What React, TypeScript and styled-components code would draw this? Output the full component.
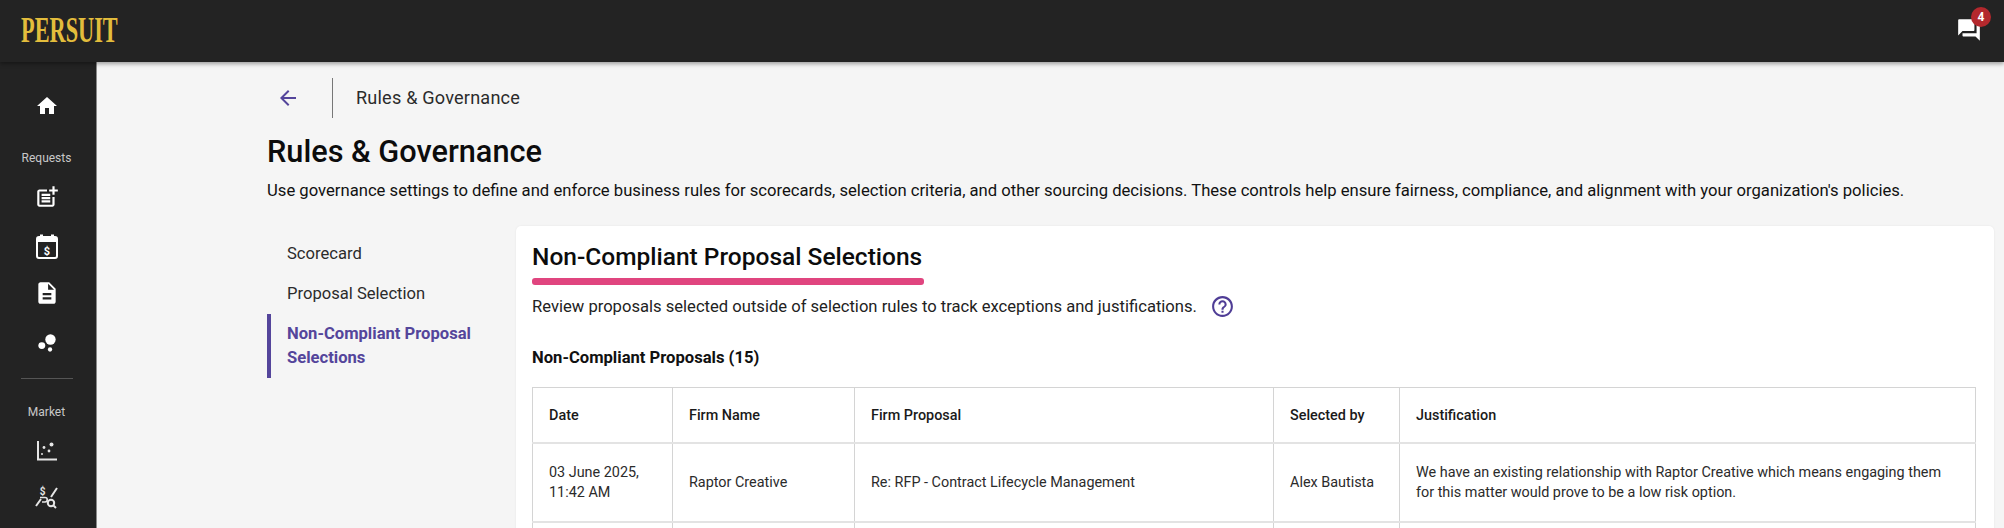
import styled, { createGlobalStyle } from "styled-components";
import { MdArrowBack, MdBubbleChart, MdDescription, MdHelpOutline, MdHome, MdOutlinePostAdd, MdQuestionAnswer } from "react-icons/md";

const GlobalStyle = createGlobalStyle`
  html, body {
    margin: 0;
    padding: 0;
    background: #f5f5f5;
    font-family: Roboto, "Liberation Sans", sans-serif;
    overflow: hidden;
  }
`;

const Page = styled.div`
  width: 2004px;
  height: 528px;
  display: flex;
  flex-direction: column;
  overflow: hidden;
`;

const TopBar = styled.header`
  height: 62px;
  flex: none;
  background: #232323;
  display: flex;
  align-items: center;
  justify-content: space-between;
  padding: 0 22px 0 21px;
  box-shadow: 0 2px 4px rgba(0, 0, 0, 0.35);
  position: relative;
  z-index: 2;
`;

const Logo = styled.div`
  font-family: "Liberation Serif", serif;
  font-weight: 700;
  font-size: 36px;
  line-height: 1;
  color: #e3bd3c;
  width: 97px;
  white-space: nowrap;
  transform: scaleX(0.62);
  transform-origin: left center;
  margin-top: -3px;
`;

const ChatButton = styled.div`
  position: relative;
  width: 26px;
  height: 26px;
  color: #fff;
  margin-top: -2px;
  font-size: 26px;
  line-height: 0;
`;

const Badge = styled.span`
  position: absolute;
  top: -10px;
  left: 15px;
  width: 20px;
  height: 20px;
  border-radius: 50%;
  background: #b3282d;
  color: #fff;
  font-size: 12px;
  font-weight: 700;
  line-height: 20px;
  text-align: center;
`;

const Body = styled.div`
  flex: 1;
  display: flex;
  min-height: 0;
`;

const SideBar = styled.nav`
  width: 97px;
  flex: none;
  box-sizing: border-box;
  padding-right: 3px;
  background: #232323;
  border-right: 1px solid #8a8a8a;
  display: flex;
  flex-direction: column;
  align-items: center;
  color: #fff;
`;

const SideIcon = styled.div<{ $top: number }>`
  margin-top: ${(p) => p.$top}px;
  height: 28px;
  display: flex;
  align-items: center;
  justify-content: center;
  font-size: 26px;
  line-height: 0;
`;

const SideLabel = styled.div<{ $top: number }>`
  margin-top: ${(p) => p.$top}px;
  font-size: 12px;
  line-height: 16px;
  color: #c8c8c8;
`;

const SideRule = styled.div`
  margin-top: 21px;
  width: 52px;
  height: 1px;
  background: #555;
`;

const Main = styled.main`
  flex: 1;
  min-width: 0;
  padding: 16px 10px 0 170px;
`;

const Crumbs = styled.div`
  display: flex;
  align-items: center;
  height: 40px;
`;

const BackLink = styled.div`
  width: 65px;
  padding-left: 9px;
  box-sizing: border-box;
  color: #54459b;
  font-size: 24px;
  line-height: 0;
`;

const CrumbText = styled.div`
  border-left: 1px solid #777;
  height: 40px;
  padding-left: 23px;
  line-height: 40px;
  font-size: 18.1px;
  letter-spacing: 0.2px;
  color: #2b2b2b;
`;

const Title = styled.h1`
  margin: 14px 0 0;
  font-size: 30.7px;
  line-height: 40px;
  font-weight: 500;
  color: #0c0c0c;
`;

const Lead = styled.p`
  margin: 7px 0 0;
  font-size: 16.65px;
  line-height: 24px;
  color: #111;
  white-space: nowrap;
`;

const Columns = styled.div`
  margin-top: 23px;
  display: flex;
`;

const SideTabs = styled.div`
  width: 249px;
  flex: none;
  padding-top: 8px;
`;

const Tab = styled.div<{ $active?: boolean }>`
  border-left: 4px solid ${(p) => (p.$active ? "#54459b" : "transparent")};
  padding: 8px 30px 8px 16px;
  font-size: 16.6px;
  line-height: 24px;
  font-weight: ${(p) => (p.$active ? 700 : 400)};
  color: ${(p) => (p.$active ? "#54459b" : "#2b2b2b")};
`;

const Card = styled.section`
  flex: 1;
  background: #fff;
  border-radius: 5px 5px 0 0;
  padding: 15px 18px 0 16px;
  height: 320px;
  box-shadow: 0 0 2px rgba(0, 0, 0, 0.08);
`;

const CardTitle = styled.h2`
  display: inline-block;
  margin: 0;
  font-size: 24.5px;
  line-height: 32px;
  font-weight: 500;
  color: #0c0c0c;

  &::after {
    content: "";
    display: block;
    height: 7px;
    margin-top: 5px;
    margin-right: -2px;
    border-radius: 3px;
    background: #e0457f;
  }
`;

const CardLead = styled.div`
  display: flex;
  align-items: center;
  gap: 13px;
  margin-top: 9px;
  font-size: 16.6px;
  line-height: 24px;
  color: #222;
`;

const HelpIcon = styled.span`
  color: #4f3d96;
  font-size: 25px;
  line-height: 0;
`;

const SectionTitle = styled.h3`
  margin: 27px 0 0;
  font-size: 16.6px;
  line-height: 24px;
  font-weight: 700;
  color: #111;
`;

const Table = styled.table`
  margin-top: 17px;
  width: 1443px;
  table-layout: fixed;
  border-collapse: collapse;
  border: 1px solid #c9c9c9;
`;

const HeadCell = styled.th`
  height: 54px;
  padding: 0 16px;
  text-align: left;
  font-size: 14.4px;
  font-weight: 500;
  color: #1a1a1a;
  border: 1px solid #d4d4d4;
  border-bottom: 2px solid #e3e3e3;
`;

const Cell = styled.td`
  height: 77px;
  padding: 0 16px;
  font-size: 14.4px;
  line-height: 20px;
  color: #2b2b2b;
  border: 1px solid #d4d4d4;
  border-bottom: 2px solid #e3e3e3;
`;

const DollarCalendar = () => (
  <svg width="24" height="26" viewBox="0 0 24 26" fill="none">
    <rect x="2" y="3" width="20" height="21" rx="2" stroke="#fff" strokeWidth="2" />
    <rect x="2" y="3" width="20" height="5" fill="#fff" />
    <rect x="5" y="0.5" width="3" height="3" fill="#fff" />
    <rect x="16" y="0.5" width="3" height="3" fill="#fff" />
    <text x="12" y="20.5" fontSize="11" fontWeight="700" fontFamily="Roboto" fill="#fff" textAnchor="middle">$</text>
  </svg>
);

const ScatterChart = () => (
  <svg width="20" height="20" viewBox="0 0 20 20" fill="#e6e6e6">
    <path d="M0 0h2v17.5h18v2H0z" />
    <circle cx="14.5" cy="3.5" r="2" />
    <circle cx="7" cy="6.5" r="1.4" />
    <circle cx="12" cy="10" r="1.4" />
    <circle cx="5" cy="13" r="1" />
  </svg>
);

const PriceSearch = () => (
  <svg width="24" height="26" viewBox="0 0 24 26" fill="none" stroke="#e6e6e6" strokeWidth="2">
    <text x="7.5" y="9.5" fontSize="10" fontWeight="700" fontFamily="Roboto" fill="#e6e6e6" stroke="none" textAnchor="middle">$</text>
    <path d="M22 3l-6 9M1 21l5-7" />
    <path d="M5 12.5h5a2 2 0 0 1 0 4.5H7" strokeWidth="1.6" />
    <circle cx="16" cy="18" r="3.2" />
    <path d="M18.5 20.5l2.5 2.5" />
  </svg>
);

const rows = [
  {
    date: ["03 June 2025,", "11:42 AM"],
    firm: "Raptor Creative",
    proposal: "Re: RFP - Contract Lifecycle Management",
    by: "Alex Bautista",
    why: "We have an existing relationship with Raptor Creative which means engaging them for this matter would prove to be a low risk option.",
  },
];

export default function App() {
  return (
    <Page>
      <GlobalStyle />
      <TopBar>
        <Logo>PERSUIT</Logo>
        <ChatButton>
          <MdQuestionAnswer />
          <Badge>4</Badge>
        </ChatButton>
      </TopBar>
      <Body>
        <SideBar>
          <SideIcon $top={30}><MdHome size={24} /></SideIcon>
          <SideLabel $top={30}>Requests</SideLabel>
          <SideIcon $top={17}><MdOutlinePostAdd /></SideIcon>
          <SideIcon $top={22}><DollarCalendar /></SideIcon>
          <SideIcon $top={18}><MdDescription /></SideIcon>
          <SideIcon $top={22}><MdBubbleChart /></SideIcon>
          <SideRule />
          <SideLabel $top={25}>Market</SideLabel>
          <SideIcon $top={17}><ScatterChart /></SideIcon>
          <SideIcon $top={19}><PriceSearch /></SideIcon>
        </SideBar>
        <Main>
          <Crumbs>
            <BackLink><MdArrowBack /></BackLink>
            <CrumbText>Rules &amp; Governance</CrumbText>
          </Crumbs>
          <Title>Rules &amp; Governance</Title>
          <Lead>
            Use governance settings to define and enforce business rules for scorecards, selection criteria, and other sourcing decisions. These controls help ensure fairness, compliance, and alignment with your organization's policies.
          </Lead>
          <Columns>
            <SideTabs>
              <Tab>Scorecard</Tab>
              <Tab>Proposal Selection</Tab>
              <Tab $active>Non-Compliant Proposal Selections</Tab>
            </SideTabs>
            <Card>
              <CardTitle>Non-Compliant Proposal Selections</CardTitle>
              <CardLead>
                Review proposals selected outside of selection rules to track exceptions and justifications.
                <HelpIcon><MdHelpOutline /></HelpIcon>
              </CardLead>
              <SectionTitle>Non-Compliant Proposals (15)</SectionTitle>
              <Table>
                <colgroup>
                  <col width="140" />
                  <col width="182" />
                  <col width="419" />
                  <col width="126" />
                  <col width="576" />
                </colgroup>
                <thead>
                  <tr>
                    <HeadCell>Date</HeadCell>
                    <HeadCell>Firm Name</HeadCell>
                    <HeadCell>Firm Proposal</HeadCell>
                    <HeadCell>Selected by</HeadCell>
                    <HeadCell>Justification</HeadCell>
                  </tr>
                </thead>
                <tbody>
                  {rows.map((r) => (
                    <tr key={r.firm}>
                      <Cell>{r.date[0]}<br />{r.date[1]}</Cell>
                      <Cell>{r.firm}</Cell>
                      <Cell>{r.proposal}</Cell>
                      <Cell>{r.by}</Cell>
                      <Cell>{r.why}</Cell>
                    </tr>
                  ))}
                  <tr>
                    <Cell />
                    <Cell />
                    <Cell />
                    <Cell />
                    <Cell />
                  </tr>
                </tbody>
              </Table>
            </Card>
          </Columns>
        </Main>
      </Body>
    </Page>
  );
}
